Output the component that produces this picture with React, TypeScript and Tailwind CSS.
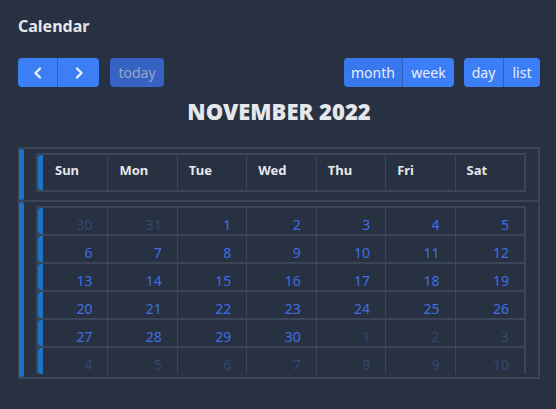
import React from "react";

const weeks: { n: number; dim: boolean }[][] = [
  [30, 31, 1, 2, 3, 4, 5].map((n, i) => ({ n, dim: i < 2 })),
  [6, 7, 8, 9, 10, 11, 12].map((n) => ({ n, dim: false })),
  [13, 14, 15, 16, 17, 18, 19].map((n) => ({ n, dim: false })),
  [20, 21, 22, 23, 24, 25, 26].map((n) => ({ n, dim: false })),
  [27, 28, 29, 30, 1, 2, 3].map((n, i) => ({ n, dim: i > 3 })),
  [4, 5, 6, 7, 8, 9, 10].map((n) => ({ n, dim: true })),
];

const days = ["Sun", "Mon", "Tue", "Wed", "Thu", "Fri", "Sat"];

function Chevron({ dir }: { dir: "left" | "right" }) {
  return (
    <svg width="12" height="12" viewBox="0 0 12 12" fill="none">
      <path
        d={dir === "left" ? "M8 1.5 L3.5 6 L8 10.5" : "M4 1.5 L8.5 6 L4 10.5"}
        stroke="#e8eefc"
        strokeWidth="2.4"
        strokeLinecap="round"
        strokeLinejoin="round"
      />
    </svg>
  );
}

export default function App() {
  return (
    <div
      className="w-[556px] h-[409px] bg-[#283142] pl-[18px] pr-[16px] pt-[15px] overflow-hidden"
      style={{ fontFamily: '"Noto Sans", "Open Sans", sans-serif' }}
    >
      <div className="text-[16px] leading-[23px] font-bold text-[#e5e7eb]">Calendar</div>

      <div className="mt-[20px] flex items-center justify-between h-[29px]">
        <div className="flex items-center">
          <div className="flex h-[29px] rounded-[4px] overflow-hidden">
            <button className="w-[40px] h-full bg-[#3c7ef6] flex items-center justify-center border-r border-[#2c5fc0]">
              <Chevron dir="left" />
            </button>
            <button className="w-[41px] h-full bg-[#3c7ef6] flex items-center justify-center">
              <Chevron dir="right" />
            </button>
          </div>
          <button className="ml-[11px] w-[54px] h-[29px] rounded-[4px] bg-[#3562c4] text-[14px] text-[#9aa6c4] flex items-center justify-center">
            today
          </button>
        </div>
        <div className="flex items-center">
          <div className="flex h-[29px] rounded-[4px] overflow-hidden text-[14px] text-[#e8eefc]">
            <button className="w-[59px] h-full bg-[#3877ec] flex items-center justify-center border-r border-[#2c5fc0]">
              month
            </button>
            <button className="w-[51px] h-full bg-[#3c7ef6] flex items-center justify-center">
              week
            </button>
          </div>
          <div className="ml-[10px] flex h-[29px] rounded-[4px] overflow-hidden text-[14px] text-[#e8eefc]">
            <button className="w-[40px] h-full bg-[#3c7ef6] flex items-center justify-center border-r border-[#2c5fc0]">
              day
            </button>
            <button className="w-[36px] h-full bg-[#3c7ef6] flex items-center justify-center">
              list
            </button>
          </div>
        </div>
      </div>

      <div className="mt-[10px] text-center text-[22px] leading-[28px] font-black text-[#e5e7eb]">
        NOVEMBER 2022
      </div>

      <div className="mt-[22px] w-[522px] border-2 border-[#3a4558]">
        {/* header section */}
        <div className="flex">
          <div className="-ml-px w-[5px] bg-[#1d72c4] rounded-[3px]" />
          <div className="flex-1 pl-[12px] pr-[12px] pt-[4px] pb-[8px]">
            <div className="border-2 border-[#3a4558] grid grid-cols-7">
              {days.map((d, i) => (
                <div
                  key={d}
                  className={
                    "h-[35px] flex items-center pb-[4px] text-[13px] font-bold text-[#e5e7eb] " +
                    (i === 0
                      ? "border-l-[5px] border-[#1d72c4] rounded-l-[3px] pl-[12px]"
                      : "border-l border-[#3a4558] pl-[11px]")
                  }
                >
                  {d}
                </div>
              ))}
            </div>
          </div>
        </div>
        <div className="h-[2px] bg-[#3a4558]" />
        {/* body section */}
        <div className="flex h-[175px]">
          <div className="-ml-px w-[5px] bg-[#1d72c4] rounded-[3px]" />
          <div className="flex-1 pl-[12px] pr-[12px] pt-[4px] pb-[3px]">
            <div className="h-[168px] overflow-hidden">
              <div className="border-2 border-[#3a4558]">
                {weeks.map((w, ri) => (
                  <div key={ri} className="grid grid-cols-7 border-b-2 border-[#3a4558]">
                    {w.map((c, ci) => (
                      <div
                        key={ci}
                        className={
                          "h-[26px] flex items-end justify-end pr-[15px] text-[14px] leading-[18px] " +
                          (c.dim ? "text-[#33476f] " : "text-[#3d6fe4] ") +
                          (ci === 0
                            ? "border-l-[5px] border-[#1d72c4] rounded-l-[3px]"
                            : "border-l border-[#3a4558]")
                        }
                      >
                        {c.n}
                      </div>
                    ))}
                  </div>
                ))}
              </div>
            </div>
          </div>
        </div>
      </div>
    </div>
  );
}
